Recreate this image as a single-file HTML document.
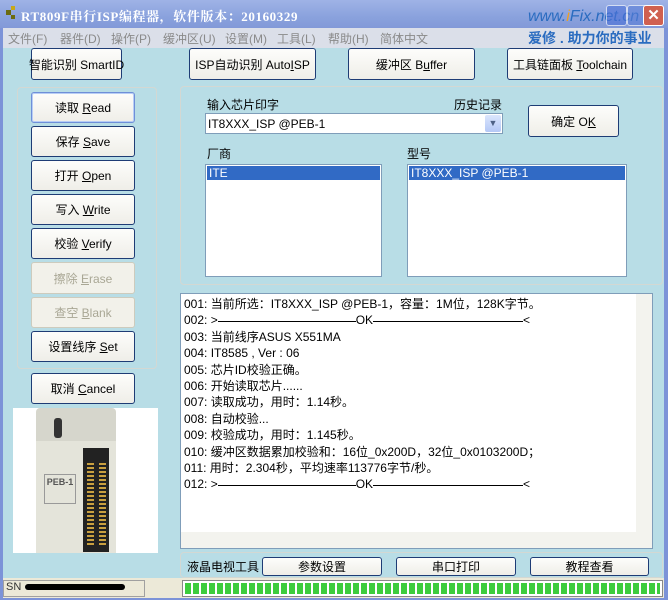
<!DOCTYPE html>
<html><head><meta charset="utf-8"><style>
*{box-sizing:border-box;margin:0;padding:0}
body{width:668px;height:600px;overflow:hidden;background:#7c93d8;font-family:"Liberation Sans","Noto Sans CJK SC",sans-serif;font-size:12px;color:#000;position:relative}
.a{position:absolute}
.title{left:0;top:0;width:668px;height:28px;background:linear-gradient(#9fb3e6,#8aa2dd 60%,#8299d8)}
.menu{left:3px;top:28px;width:661px;height:20px;background:#dbdfe9;color:#8a8a8a;font-size:12px}
.client{left:3px;top:48px;width:661px;height:530px;background:#b8dde6}
.btn{position:absolute;background:linear-gradient(#fdfdfb,#efeee8);border:1px solid #1e3c75;border-radius:3px;text-align:center;font-size:12px;color:#000;display:flex;align-items:center;justify-content:center;white-space:nowrap}
.dis{border-color:#cdcbbd;color:#a9a795;background:#f2f1ea}
.grp{position:absolute;border:1px solid #d3d8d3;border-radius:4px}
.box{position:absolute;background:#fff;border:1px solid #7f9db9}
.sel{background:#316ac5;color:#fff;height:14px;line-height:14px;padding-left:2px;font-size:12px}
.log div{height:16.4px;line-height:16.4px;white-space:nowrap}
.ln{display:inline-block;height:1px;background:#000;vertical-align:middle}
u{text-decoration:underline}
</style></head><body>
<div class="a title">
 <div class="a" style="left:6px;top:10px;width:5px;height:5px;background:#6b6b10"></div>
 <div class="a" style="left:11px;top:6px;width:4px;height:4px;background:#c8a818"></div>
 <div class="a" style="left:11px;top:15px;width:4px;height:4px;background:#6b6b10"></div>
 <div class="a" style="left:21px;top:6px;color:#fff;font-family:'Liberation Serif','Noto Serif CJK SC',serif;font-weight:bold;font-size:13px;letter-spacing:.6px">RT809F串行ISP编程器，软件版本：20160329</div>
 <div class="a" style="left:528px;top:8px;color:#2a6cc0;font-style:italic;font-size:16px">www.<span style="color:#f0a020">i</span>Fix.net.cn</div>
 <div class="a" style="left:606px;top:5px;width:21px;height:21px;background:#4a70d8;border:1px solid #fff;border-radius:3px;opacity:.6"></div>
 <div class="a" style="left:627px;top:5px;width:21px;height:21px;background:#5a7ed8;border:1px solid #fff;border-radius:3px;opacity:.6"></div>
 <div class="a" style="left:643px;top:5px;width:21px;height:21px;background:#d06050;border:1px solid #fff;border-radius:3px;color:#fff;font-weight:bold;font-size:15px;text-align:center;line-height:19px">✕</div>
</div>
<div class="a menu">
 <span class="a" style="left:5px;top:2px">文件(F)</span>
 <span class="a" style="left:57px;top:2px">器件(D)</span>
 <span class="a" style="left:108px;top:2px">操作(P)</span>
 <span class="a" style="left:160px;top:2px">缓冲区(U)</span>
 <span class="a" style="left:222px;top:2px">设置(M)</span>
 <span class="a" style="left:274px;top:2px">工具(L)</span>
 <span class="a" style="left:325px;top:2px">帮助(H)</span>
 <span class="a" style="left:377px;top:2px">简体中文</span>
 <span class="a" style="left:525px;top:0px;color:#2a6cc0;font-weight:bold;font-size:14px">爱修 . 助力你的事业</span>
</div>
<div class="a client"></div>
<div class="btn" style="left:31px;top:48px;width:91px;height:32px"><span>智能识别 SmartID</span></div>
<div class="btn" style="left:189px;top:48px;width:127px;height:32px"><span>ISP自动识别 Auto<u>I</u>SP</span></div>
<div class="btn" style="left:348px;top:48px;width:127px;height:32px"><span>缓冲区 B<u>u</u>ffer</span></div>
<div class="btn" style="left:507px;top:48px;width:126px;height:32px"><span>工具链面板 <u>T</u>oolchain</span></div>

<div class="grp" style="left:17px;top:87px;width:140px;height:282px"></div>
<div class="btn" style="left:31px;top:92px;width:104px;height:31px;border-color:#6f8fd8;box-shadow:inset 0 0 0 1px #b8cef5"><span>读取 <u>R</u>ead</span></div>
<div class="btn" style="left:31px;top:126px;width:104px;height:31px"><span>保存 <u>S</u>ave</span></div>
<div class="btn" style="left:31px;top:160px;width:104px;height:31px"><span>打开 <u>O</u>pen</span></div>
<div class="btn" style="left:31px;top:194px;width:104px;height:31px"><span>写入 <u>W</u>rite</span></div>
<div class="btn" style="left:31px;top:228px;width:104px;height:31px"><span>校验 <u>V</u>erify</span></div>
<div class="btn dis" style="left:31px;top:262px;width:104px;height:32px"><span>擦除 <u>E</u>rase</span></div>
<div class="btn dis" style="left:31px;top:297px;width:104px;height:31px"><span>查空 <u>B</u>lank</span></div>
<div class="btn" style="left:31px;top:331px;width:104px;height:31px"><span>设置线序 <u>S</u>et</span></div>
<div class="btn" style="left:31px;top:373px;width:104px;height:31px"><span>取消 <u>C</u>ancel</span></div>

<div class="a" style="left:13px;top:408px;width:145px;height:145px;background:#fff">
 <div class="a" style="left:23px;top:0;width:80px;height:145px;background:#d6d6cc;border-radius:4px"></div>
 <div class="a" style="left:23px;top:33px;width:80px;height:112px;background:#e4e4da"></div>
 <div class="a" style="left:41px;top:10px;width:8px;height:20px;background:#333;border-radius:3px"></div>
 <div class="a" style="left:70px;top:40px;width:26px;height:104px;background:#222"></div>
 <div class="a" style="left:74px;top:55px;width:7px;height:84px;background:repeating-linear-gradient(#c9a040 0 2px,#222 2px 4px)"></div>
 <div class="a" style="left:86px;top:55px;width:7px;height:84px;background:repeating-linear-gradient(#c9a040 0 2px,#222 2px 4px)"></div>
 <div class="a" style="left:31px;top:66px;width:32px;height:30px;border:1px solid #999;font-size:9px;color:#555;font-weight:bold;text-align:center;line-height:14px">PEB-1</div>
</div>

<div class="grp" style="left:180px;top:86px;width:483px;height:199px"></div>
<div class="a" style="left:207px;top:96px">输入芯片印字</div>
<div class="a" style="left:454px;top:96px">历史记录</div>
<div class="box" style="left:205px;top:113px;width:298px;height:21px;padding:3px 2px;font-size:12px">IT8XXX_ISP @PEB-1
 <div class="a" style="right:1px;top:1px;width:16px;height:17px;background:linear-gradient(#dbe6fd,#b4c8f6);border-radius:2px;color:#4d6185;text-align:center;font-size:9px;line-height:17px">▼</div>
</div>
<div class="btn" style="left:528px;top:105px;width:91px;height:32px"><span>确定 O<u>K</u></span></div>
<div class="a" style="left:207px;top:145px">厂商</div>
<div class="a" style="left:407px;top:145px">型号</div>
<div class="box" style="left:205px;top:164px;width:177px;height:113px;padding:1px"><div class="sel">ITE</div></div>
<div class="box" style="left:407px;top:164px;width:220px;height:113px;padding:1px"><div class="sel">IT8XXX_ISP @PEB-1</div></div>

<div class="box log" style="left:180px;top:293px;width:473px;height:256px;padding:2px 3px">
<div>001: 当前所选：IT8XXX_ISP @PEB-1，容量：1M位，128K字节。</div>
<div>002: &gt;<span class="ln" style="width:138px"></span>OK<span class="ln" style="width:150px"></span>&lt;</div>
<div>003: 当前线序ASUS X551MA</div>
<div>004: IT8585 , Ver : 06</div>
<div>005: 芯片ID校验正确。</div>
<div>006: 开始读取芯片......</div>
<div>007: 读取成功，用时：1.14秒。</div>
<div>008: 自动校验...</div>
<div>009: 校验成功，用时：1.145秒。</div>
<div>010: 缓冲区数据累加校验和：16位_0x200D，32位_0x0103200D；</div>
<div>011: 用时：2.304秒，平均速率113776字节/秒。</div>
<div>012: &gt;<span class="ln" style="width:138px"></span>OK<span class="ln" style="width:150px"></span>&lt;</div>
<div class="a" style="left:0;bottom:0;width:471px;height:16px;background:#f3f3ee"></div>
<div class="a" style="right:0;top:0;width:16px;height:238px;background:#f3f3ee"></div>
</div>

<div class="grp" style="left:180px;top:552px;width:483px;height:26px"></div>
<div class="a" style="left:187px;top:558px">液晶电视工具</div>
<div class="btn" style="left:262px;top:557px;width:120px;height:19px">参数设置</div>
<div class="btn" style="left:396px;top:557px;width:120px;height:19px">串口打印</div>
<div class="btn" style="left:530px;top:557px;width:119px;height:19px">教程查看</div>

<div class="a" style="left:3px;top:578px;width:661px;height:20px;background:#ece9d8"></div>
<div class="a" style="left:3px;top:580px;width:142px;height:17px;border:1px solid #a0a0a0;font-size:11px;padding-left:2px;color:#333">SN<span style="display:inline-block;width:100px;height:6px;background:#000;border-radius:3px;margin-left:4px;vertical-align:middle"></span></div>
<div class="a" style="left:182px;top:580px;width:481px;height:17px;border:1px solid #888;background:#fff;padding:2px"><div style="width:100%;height:100%;background:repeating-linear-gradient(90deg,#3ccc3c 0 6px,#fff 6px 8px)"></div></div>
</body></html>
